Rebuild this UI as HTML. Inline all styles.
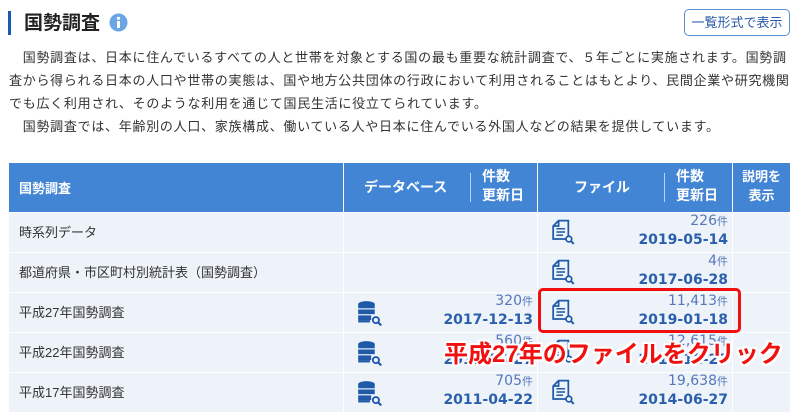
<!DOCTYPE html>
<html><head><meta charset="utf-8"><style>
*{margin:0;padding:0;box-sizing:border-box}
body{width:800px;height:415px;overflow:hidden;background:#fff;font-family:"Liberation Sans","Noto Sans CJK JP",sans-serif;color:#333;position:relative}
.a{position:absolute}
.p{font-size:13px;line-height:23px;left:9px;width:790px;color:#333;letter-spacing:0.72px;white-space:nowrap}
.cell{position:absolute;background:#eef3fa;}
.hd{position:absolute;background:#4285d4;color:#fff;font-weight:bold;font-size:13px}
.t{font-size:13px;color:#333}
.cnt{font-size:14px;color:#5577bb;text-align:right;font-family:"DejaVu Sans","Noto Sans CJK JP",sans-serif}
.cnt small{font-size:11px}
.dt{font-size:14px;font-weight:bold;color:#2a5fae;text-align:right;font-family:"DejaVu Sans","Noto Sans CJK JP",sans-serif}
</style></head><body>
<div class="a" style="left:8px;top:11px;width:3px;height:24px;background:#1a5bb0"></div>
<div class="a" style="left:24px;top:8px;font-size:19px;font-weight:bold;color:#222">国勢調査</div>
<svg class="a" style="left:109px;top:13px" width="19" height="19"><circle cx="9.5" cy="9.5" r="9" fill="#6aa6e6"/><circle cx="9.5" cy="5.3" r="1.6" fill="#fff"/><rect x="8" y="8" width="3" height="7" fill="#fff"/></svg>
<div class="a" style="left:684px;top:9px;width:106px;height:27px;border:1px solid #5b8fd0;border-radius:5px;font-size:13px;color:#2a5aa8;text-align:center;line-height:25px">一覧形式で表示</div>
<div class="a p" style="top:46px">　国勢調査は、日本に住んでいるすべての人と世帯を対象とする国の最も重要な統計調査で、５年ごとに実施されます。国勢調<br>査から得られる日本の人口や世帯の実態は、国や地方公共団体の行政において利用されることはもとより、民間企業や研究機関<br>でも広く利用され、そのような利用を通じて国民生活に役立てられています。<br>　国勢調査では、年齢別の人口、家族構成、働いている人や日本に住んでいる外国人などの結果を提供しています。</div>

<div class="hd" style="left:9px;top:163px;width:334px;height:49px;padding:15px 0 0 10px">国勢調査</div>
<div class="hd" style="left:344px;top:163px;width:193px;height:49px"><span class="a" style="left:20px;top:14px;font-size:14px">データベース</span><span class="a" style="left:126px;top:10px;width:1px;height:29px;background:#b9d2ef"></span><span class="a" style="left:138px;top:4px;line-height:19px;font-size:14px">件数<br>更新日</span></div>
<div class="hd" style="left:538px;top:163px;width:194px;height:49px"><span class="a" style="left:36px;top:14px;font-size:14px">ファイル</span><span class="a" style="left:126px;top:10px;width:1px;height:29px;background:#b9d2ef"></span><span class="a" style="left:138px;top:4px;line-height:19px;font-size:14px">件数<br>更新日</span></div>
<div class="hd" style="left:733px;top:163px;width:57px;height:49px;text-align:center;padding-top:4px;line-height:19px">説明を<br>表示</div>

<div id="rows"></div>
<script>
var rows=[["時系列データ",null,null,"226","2019-05-14"],["都道府県・市区町村別統計表（国勢調査）",null,null,"4","2017-06-28"],["平成27年国勢調査","320","2017-12-13","11,413","2019-01-18"],["平成22年国勢調査","560","2017-06-27","12,615","2017-12-22"],["平成17年国勢調査","705","2011-04-22","19,638","2014-06-27"]];
var db='<svg width="26" height="26" viewBox="0 0 22 22"><ellipse cx="8" cy="3.5" rx="7" ry="2.5" fill="#1e5aa8"/><rect x="1" y="3.5" width="14" height="3.5" fill="#1e5aa8"/><rect x="1" y="8" width="14" height="4" fill="#1e5aa8"/><rect x="1" y="13" width="11" height="4" fill="#1e5aa8"/><path d="M1 17h10v2H1z" fill="#1e5aa8"/><circle cx="16" cy="17" r="2.6" fill="none" stroke="#1e5aa8" stroke-width="1.6"/><path d="M18 19l2.5 2.5" stroke="#1e5aa8" stroke-width="1.8"/></svg>';
var fl='<svg width="26" height="26" viewBox="0 0 24 24"><path d="M7 1.5h9v17H2V6.5z" fill="none" stroke="#1e5aa8" stroke-width="1.6"/><path d="M2 6.5h5v-5" fill="none" stroke="#1e5aa8" stroke-width="1.6"/><path d="M5 9h8M5 12h8M5 15h6" stroke="#1e5aa8" stroke-width="1.3"/><circle cx="16.5" cy="18.5" r="2.6" fill="#fff" stroke="#1e5aa8" stroke-width="1.6"/><path d="M18.5 20.5l2.5 2.5" stroke="#1e5aa8" stroke-width="1.8"/></svg>';
var h='';
rows.forEach(function(r,i){var y=213+i*40;
h+='<div class="cell" style="left:9px;top:'+y+'px;width:334px;height:39px"><span class="a t" style="left:10px;top:9px">'+r[0]+'</span></div>';
h+='<div class="cell" style="left:344px;top:'+y+'px;width:193px;height:39px">'+(r[1]?'<span class="a" style="left:13px;top:7px">'+db+'</span><span class="a cnt" style="right:4px;top:0px">'+r[1]+'<small>件</small></span><span class="a dt" style="right:4px;top:19px">'+r[2]+'</span>':'')+'</div>';
h+='<div class="cell" style="left:538px;top:'+y+'px;width:194px;height:39px"><span class="a" style="left:13px;top:6px">'+fl+'</span><span class="a cnt" style="right:4px;top:0px">'+r[3]+'<small>件</small></span><span class="a dt" style="right:4px;top:19px">'+r[4]+'</span></div>';
h+='<div class="cell" style="left:733px;top:'+y+'px;width:57px;height:39px"></div>';});
document.getElementById('rows').innerHTML=h;
</script>
<div class="a" style="left:538px;top:288px;width:203px;height:45px;border:3px solid #f01010;border-radius:5px"></div>
<div class="a" style="left:444px;top:334px;font-size:24px;font-weight:bold;color:#f01010;text-shadow:-2px -2px 0 #fff,2px -2px 0 #fff,-2px 2px 0 #fff,2px 2px 0 #fff,0 2px 0 #fff,0 -2px 0 #fff,2px 0 0 #fff,-2px 0 0 #fff">平成27年のファイルをクリック</div>
</body></html>
